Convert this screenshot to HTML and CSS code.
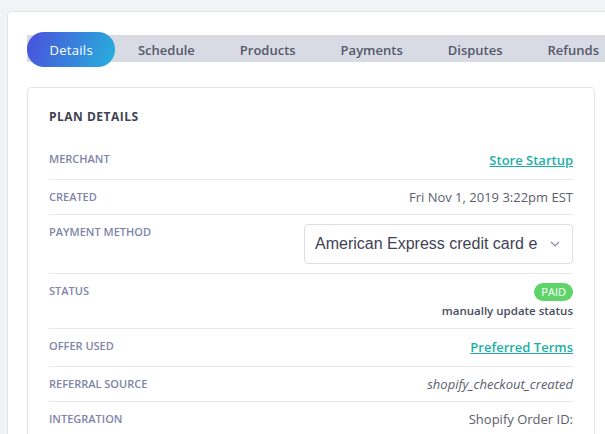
FILE: index.html
```html
<!DOCTYPE html>
<html lang="en">
<head>
    <meta charset="UTF-8">
    <meta name="viewport" content="width=device-width, initial-scale=1.0">
    <title>Plan Details</title>
    <link rel="stylesheet" href="styles.css">
</head>
<body>
    <div class="panel">
        <div class="tabs">
            <div class="tab active">Details</div>
            <div class="tab">Schedule</div>
            <div class="tab">Products</div>
            <div class="tab">Payments</div>
            <div class="tab">Disputes</div>
            <div class="tab">Refunds</div>
        </div>

        <div class="card">
            <h2 class="card-title">Plan Details</h2>

            <div class="row">
                <div class="label">Merchant</div>
                <div class="value"><a class="link" href="#">Store Startup</a></div>
            </div>
            <div class="row">
                <div class="label">Created</div>
                <div class="value">Fri Nov 1, 2019 3:22pm EST</div>
            </div>
            <div class="row">
                <div class="label">Payment Method</div>
                <div class="value">
                    <div class="select">
                        <span class="select-text">American Express credit card e</span>
                        <svg class="chevron" width="10" height="6" viewBox="0 0 10 6">
                            <path d="M1 1l4 4 4-4" fill="none" stroke="#8a8d9c" stroke-width="1.2"/>
                        </svg>
                    </div>
                </div>
            </div>
            <div class="row">
                <div class="label">Status</div>
                <div class="value stack">
                    <span class="badge">PAID</span>
                    <span class="note">manually update status</span>
                </div>
            </div>
            <div class="row">
                <div class="label">Offer Used</div>
                <div class="value"><a class="link" href="#">Preferred Terms</a></div>
            </div>
            <div class="row">
                <div class="label">Referral Source</div>
                <div class="value italic">shopify_checkout_created</div>
            </div>
            <div class="row">
                <div class="label">Integration</div>
                <div class="value">Shopify Order ID:</div>
            </div>
        </div>
    </div>
</body>
</html>
```

FILE: styles.css
```css
* {
    margin: 0;
    padding: 0;
    box-sizing: border-box;
}

html,
body {
    overflow: hidden;
}

body {
    font-family: 'Open Sans', 'Noto Sans', sans-serif;
    background: #f2f3f7;
    padding: 11px 0 0 7px;
    color: #55586b;
}

.panel {
    width: 610px;
    background: white;
    border: 1px solid #e4e5ec;
    border-radius: 4px;
    padding: 20px 0 0 19px;
    min-height: 460px;
}

/* tab strip */
.tabs {
    display: flex;
    height: 35px;
    background: linear-gradient(transparent 3px, #d9dbe4 3px, #d9dbe4 30px, transparent 30px);
}

.tab {
    display: flex;
    align-items: center;
    padding: 0 22.5px;
    font-size: 13px;
    font-weight: 600;
    color: #55586b;
    white-space: nowrap;
}

.tab.active {
    background: linear-gradient(110deg, #4a4fdc 0%, #27b1dc 100%);
    color: white;
    border-radius: 17px;
    font-weight: 500;
    letter-spacing: 0.3px;
}

/* details card */
.card {
    margin-top: 20px;
    width: 568px;
    border: 1px solid #e4e5ec;
    border-radius: 4px;
    padding: 21px 21px 0;
}

.card-title {
    font-size: 12px;
    font-weight: 700;
    letter-spacing: 0.5px;
    line-height: 16px;
    text-transform: uppercase;
    color: #3f4253;
    margin-bottom: 17px;
}

.row {
    display: flex;
    justify-content: space-between;
    align-items: flex-start;
    padding: 9px 0;
    border-bottom: 1px solid #e8e9ef;
}

.label {
    font-size: 11px;
    font-weight: 600;
    line-height: 16px;
    text-transform: uppercase;
    color: #8085a8;
}

.value {
    font-size: 13px;
    line-height: 16px;
    color: #5b5e6e;
    text-align: right;
}

.italic {
    font-style: italic;
}

.link {
    display: block;
    font-size: 13px;
    font-weight: 600;
    line-height: 19px;
    color: #1bb0a6;
    text-decoration: underline;
}

.select {
    display: flex;
    align-items: center;
    width: 269px;
    height: 40px;
    border: 1px solid #dcdee6;
    border-radius: 4px;
    padding: 0 12px 0 10px;
    gap: 12px;
}

.select-text {
    flex: 1;
    overflow: hidden;
    white-space: nowrap;
    text-align: left;
    font-family: 'Liberation Sans', Arial, sans-serif;
    font-size: 16px;
    color: #3f4253;
}

.stack {
    display: flex;
    flex-direction: column;
    align-items: flex-end;
    gap: 2px;
}

.badge {
    background: #5fd46b;
    color: white;
    font-size: 11px;
    font-weight: 500;
    line-height: 18px;
    padding: 0 7px;
    border-radius: 9px;
}

.note {
    font-size: 11.5px;
    font-weight: 600;
    line-height: 16px;
    color: #4a4d5e;
}
```
